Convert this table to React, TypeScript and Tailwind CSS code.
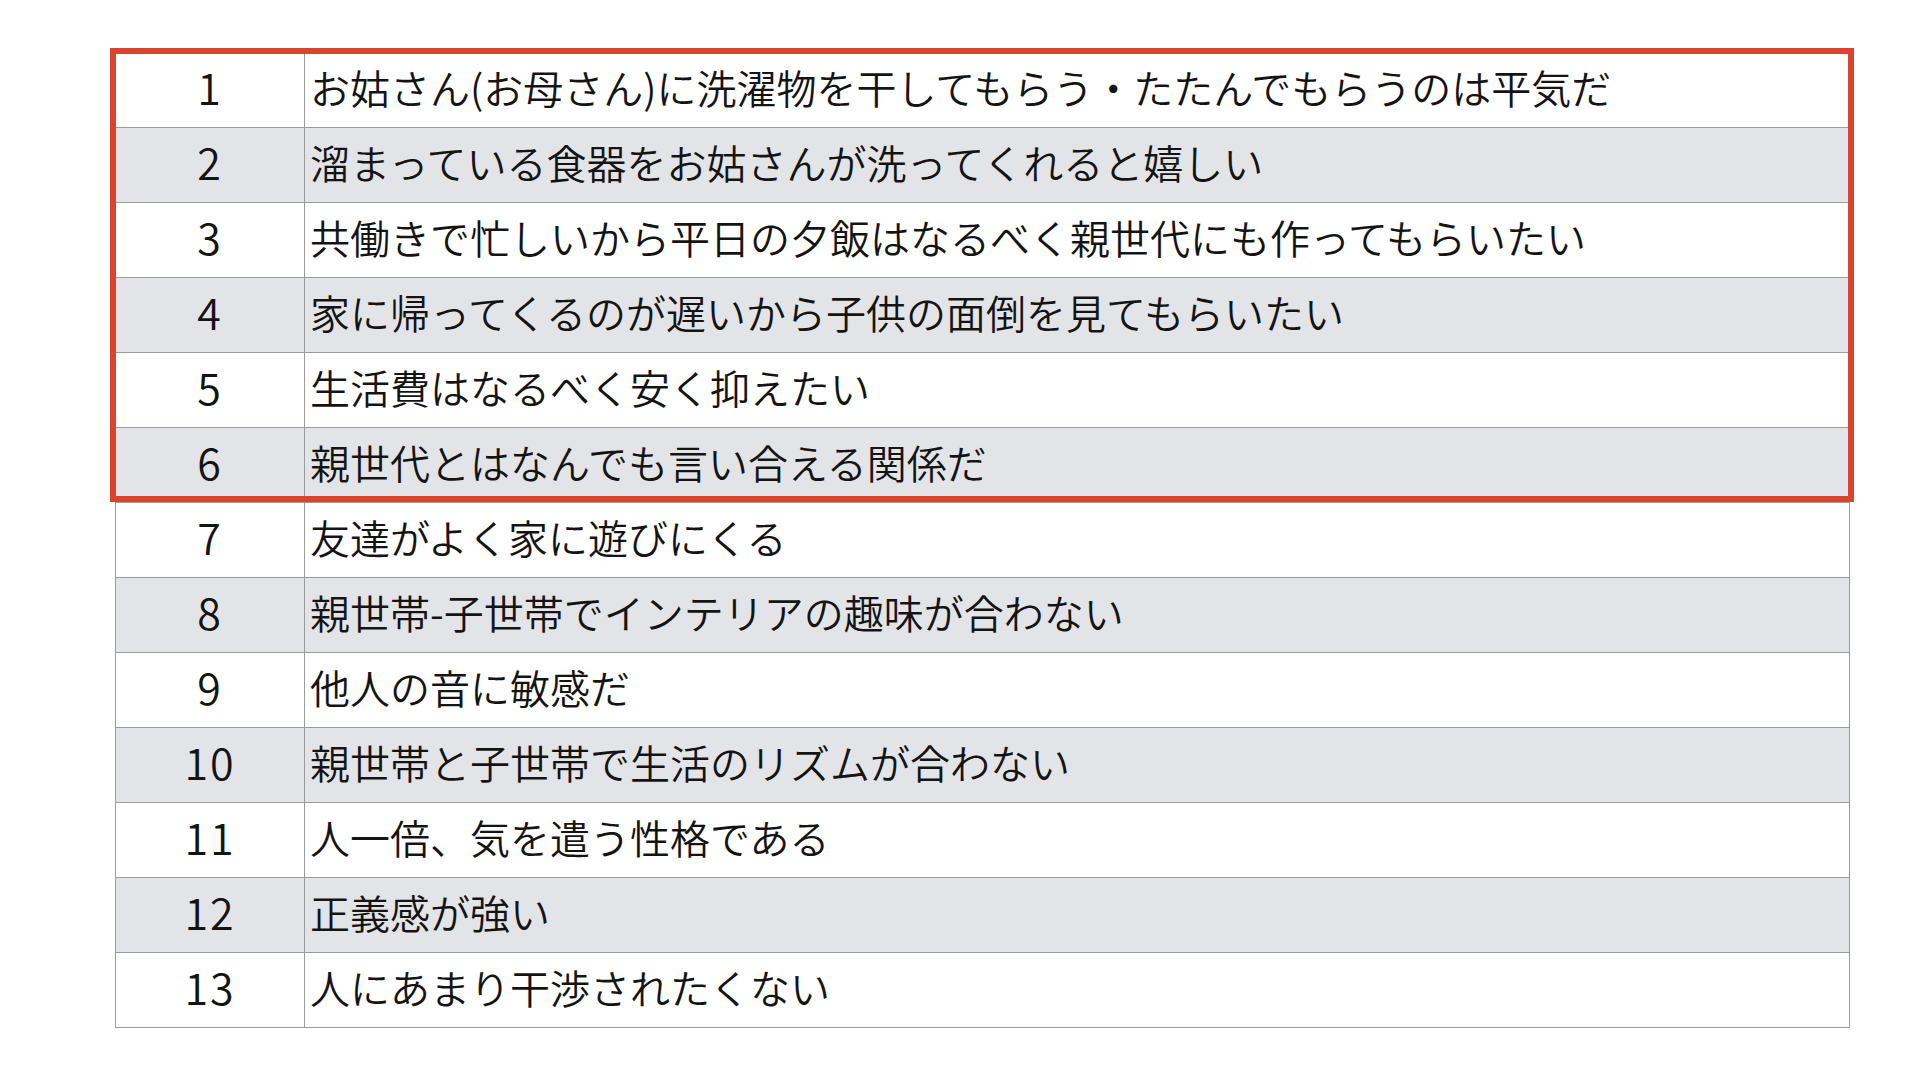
const rows = [
  "お姑さん(お母さん)に洗濯物を干してもらう・たたんでもらうのは平気だ",
  "溜まっている食器をお姑さんが洗ってくれると嬉しい",
  "共働きで忙しいから平日の夕飯はなるべく親世代にも作ってもらいたい",
  "家に帰ってくるのが遅いから子供の面倒を見てもらいたい",
  "生活費はなるべく安く抑えたい",
  "親世代とはなんでも言い合える関係だ",
  "友達がよく家に遊びにくる",
  "親世帯-子世帯でインテリアの趣味が合わない",
  "他人の音に敏感だ",
  "親世帯と子世帯で生活のリズムが合わない",
  "人一倍、気を遣う性格である",
  "正義感が強い",
  "人にあまり干渉されたくない",
];

export default function App() {
  return (
    <div
      className="min-h-screen w-full bg-white pt-[52px] pl-[115px] text-[#141414]"
      style={{ fontFamily: '"Noto Sans CJK JP", "Noto Sans", sans-serif' }}
    >
      <div className="relative w-[1735px]">
        <div className="border-x border-b border-[#9b9b9b]">
          {rows.map((text, i) => (
            <div
              key={i}
              className={`flex h-[75px] border-t border-[#9b9b9b] ${
                i % 2 === 1 ? "bg-[#e3e4e8]" : "bg-white"
              }`}
            >
              <div className="flex w-[188px] items-center justify-center pb-[7px] text-[43px] leading-none font-[350] tracking-[2px]">
                {i + 1}
              </div>
              <div className="flex flex-1 items-center border-l border-[#9b9b9b] pb-[7px] pl-[5px] text-[40px] leading-none font-[350] whitespace-nowrap">
                {text}
              </div>
            </div>
          ))}
        </div>
        {/* red highlight around rows 1-6 */}
        <div className="pointer-events-none absolute left-[-5px] top-[-4px] h-[454px] w-[1744px] border-[6px] border-[#d9432f]" />
      </div>
    </div>
  );
}
